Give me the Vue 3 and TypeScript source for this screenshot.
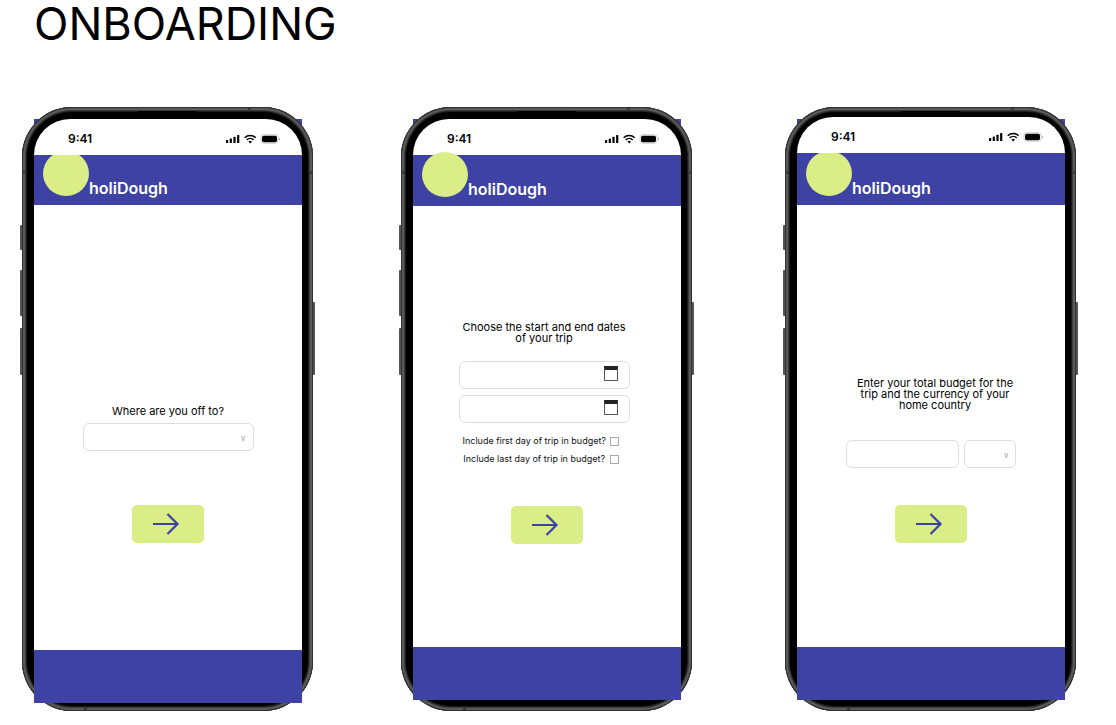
<script setup lang="ts">
import { reactive } from 'vue'

type StepKind = 'destination' | 'dates' | 'budget'

const steps: StepKind[] = ['destination', 'dates', 'budget']

const trip = reactive({
  destination: '',
  start: '',
  end: '',
  includeFirst: false,
  includeLast: false,
  budget: '',
  currency: '',
})
</script>

<template>
  <div class="page">
    <h1 class="title">ONBOARDING</h1>
    <div class="board">
      <section v-for="kind in steps" :key="kind" class="phone" :class="kind">
        <div class="backdrop" aria-hidden="true"></div>
        <div class="frame" aria-hidden="true">
          <i class="key action"></i>
          <i class="key up"></i>
          <i class="key down"></i>
          <i class="key power"></i>
          <i class="speaker"></i>
          <i class="band band-top"></i>
          <i class="band band-bottom"></i>
          <i class="band-side"></i>
        </div>

        <div class="status">
          <span>9:41</span>
          <svg class="signals" width="55" height="12" viewBox="0 0 55 12" aria-hidden="true">
            <rect x="0" y="7" width="2.2" height="3" rx=".6" />
            <rect x="3.7" y="5.5" width="2.2" height="4.5" rx=".6" />
            <rect x="7.4" y="3.7" width="2.2" height="6.3" rx=".6" />
            <rect x="11.1" y="2" width="2.2" height="8" rx=".6" />
            <g fill="none" stroke="#000" stroke-width="1.5">
              <path d="M18.7 4.7a8 8 0 0 1 11 0" />
              <path d="M20.7 6.9a5 5 0 0 1 7 0" />
            </g>
            <path d="M22.4 8.5a2.6 2.6 0 0 1 3.6 0L24.2 10.4z" />
            <rect x="35" y="1.7" width="17" height="8.6" rx="2.6" fill="#fff" stroke="#bbb" stroke-width=".7" />
            <rect x="36" y="2.7" width="15" height="6.6" rx="1.7" />
            <path d="M53 4.5v3a1.6 1.6 0 0 0 0-3z" fill="#aaa" />
          </svg>
        </div>

        <header class="brand">
          <span class="logo"></span>
          <span class="name">holiDough</span>
        </header>

        <form class="step" @submit.prevent>
          <div v-if="kind === 'destination'" class="fields">
            <label class="prompt" for="destination">Where are you off to?</label>
            <div class="field">
              <select id="destination" v-model="trip.destination" class="box">
                <option value=""></option>
              </select>
              <span class="chevron" aria-hidden="true">v</span>
            </div>
          </div>

          <div v-else-if="kind === 'dates'" class="fields">
            <p class="prompt">Choose the start and end dates of your trip</p>
            <div class="stack">
              <div class="field">
                <input v-model="trip.start" class="box" type="text" aria-label="Start date" />
                <button class="calendar" type="button" aria-label="Pick start date"></button>
              </div>
              <div class="field">
                <input v-model="trip.end" class="box" type="text" aria-label="End date" />
                <button class="calendar" type="button" aria-label="Pick end date"></button>
              </div>
            </div>
            <div class="checks">
              <label for="first-day">Include first day of trip in budget?</label>
              <input id="first-day" v-model="trip.includeFirst" type="checkbox" />
              <label for="last-day">Include last day of trip in budget?</label>
              <input id="last-day" v-model="trip.includeLast" type="checkbox" />
            </div>
          </div>

          <div v-else class="fields">
            <p class="prompt">Enter your total budget for the trip and the currency of your home country</p>
            <div class="pair">
              <input v-model="trip.budget" class="box" type="text" aria-label="Total budget" />
              <div class="field">
                <select v-model="trip.currency" class="box" aria-label="Home currency">
                  <option value=""></option>
                </select>
                <span class="chevron" aria-hidden="true">v</span>
              </div>
            </div>
          </div>

          <button class="next" type="submit" aria-label="Next">
            <svg width="28" height="22" viewBox="0 0 28 22" fill="none" stroke="#3d42a4" stroke-width="2.2" aria-hidden="true">
              <path d="M1 11h25M15.5 1l10 10-10 10" />
            </svg>
          </button>
        </form>

        <footer class="foot"></footer>
      </section>
    </div>
  </div>
</template>

<style>
body {
  margin: 0;
  background: #fff;
}
</style>

<style scoped>
.page {
  box-sizing: border-box;
  min-height: 100vh;
  padding-bottom: 14px;
  display: flex;
  flex-direction: column;
  font-family: Inter, "Liberation Sans", sans-serif;
  color: #000;
}
.title {
  margin: 0;
  padding: 0 34px 59px;
  font-size: 45px;
  line-height: 48px;
  font-weight: 400;
}
.board {
  flex: 1;
  display: grid;
  grid-template-columns: 379fr 384fr 331fr;
  padding-left: 22px;
}
.phone {
  --brow: 12px;
  --chin: 8px;
  --brand: 50px;
  --below: 107px;
  --gap: 54px;
  position: relative;
  isolation: isolate;
  box-sizing: border-box;
  width: 291px;
  padding: var(--brow) 11px var(--chin) 12px;
  display: flex;
  flex-direction: column;
}
.dates {
  --chin: 11px;
  --brand: 51px;
  --below: 103px;
  --gap: 38px;
}
.budget {
  --brow: 10px;
  --chin: 11px;
  --brand: 52px;
  --below: 104px;
  --gap: 37px;
}
.backdrop {
  position: absolute;
  z-index: -2;
  top: 12px;
  left: 12px;
  right: 11px;
  height: 60px;
  background: #3d42a4;
}
.frame {
  position: absolute;
  z-index: -1;
  inset: 0;
  border-radius: 50px;
  background: #000;
  box-shadow:
    inset 0 0 0 1px #303030,
    inset 0 0 0 3px #5a5a5a,
    inset 0 0 0 4px #3a3a3a,
    inset 0 0 0 5px #1c1c1c;
}
.key {
  position: absolute;
  left: -2px;
  width: 2px;
  border-radius: 1px 0 0 1px;
  background: #555;
}
.action {
  top: 118px;
  height: 25px;
}
.up {
  top: 163px;
  height: 46px;
}
.down {
  top: 221px;
  height: 47px;
}
.power {
  left: auto;
  right: -2px;
  top: 195px;
  height: 73px;
  border-radius: 0 1px 1px 0;
}
.speaker {
  position: absolute;
  top: 4px;
  left: 40%;
  width: 20%;
  height: 2px;
  border-radius: 1px;
  background: #000;
}
.band {
  position: absolute;
  width: 3px;
  height: 3px;
  background: #383838;
}
.band-top {
  top: 1px;
  right: 62px;
}
.band-bottom {
  bottom: 1px;
  left: 62px;
}
.band-side {
  position: absolute;
  top: 64px;
  left: 0;
  right: 0;
  height: 3px;
  background: linear-gradient(90deg, #3a3a3a 4px, transparent 4px calc(100% - 4px), #3a3a3a calc(100% - 4px));
}
.status {
  box-sizing: border-box;
  height: 36px;
  padding: 4px 21px 0 34px;
  display: flex;
  align-items: center;
  justify-content: space-between;
  border-radius: 42px 42px 0 0;
  background: #fff;
  font-size: 12px;
  line-height: 16px;
  font-weight: 600;
}
.brand {
  position: relative;
  height: var(--brand);
  padding-left: 9px;
  display: flex;
  align-items: flex-end;
  overflow: hidden;
  background: #3d42a4;
}
.dates .brand {
  overflow: visible;
}
.logo {
  flex: none;
  width: 46px;
  height: 45px;
  margin-bottom: 9px;
  border-radius: 50%;
  background: #dbed87;
}
.name {
  margin-bottom: 7px;
  color: #fff;
  font-size: 16px;
  line-height: 20px;
  font-weight: 600;
}
.step {
  flex: 1;
  padding-bottom: var(--below);
  display: flex;
  flex-direction: column;
  align-items: center;
  justify-content: flex-end;
  gap: var(--gap);
  background: #fff;
}
.fields {
  width: 171px;
  display: flex;
  flex-direction: column;
}
.dates .fields {
  padding-right: 6px;
}
.prompt {
  margin: 0 0 6px;
  font-size: 11px;
  line-height: 11px;
  text-align: center;
}
.dates .prompt {
  margin-bottom: 17px;
}
.budget .prompt {
  margin-bottom: 29px;
  padding: 0 2px 0 10px;
}
.field {
  position: relative;
}
.box {
  display: block;
  box-sizing: border-box;
  width: 100%;
  height: 28px;
  margin: 0;
  padding: 0 28px 0 8px;
  border: 1px solid #dedede;
  border-radius: 6px;
  background: #fff;
  font: 11px Inter, "Liberation Sans", sans-serif;
  appearance: none;
}
.chevron {
  position: absolute;
  right: 8px;
  top: 10px;
  font-size: 8px;
  line-height: 10px;
  color: #999;
  pointer-events: none;
}
.stack {
  display: flex;
  flex-direction: column;
  gap: 6px;
}
.calendar {
  position: absolute;
  right: 12px;
  top: 5px;
  width: 14px;
  height: 15px;
  padding: 0;
  border: 1px solid #555;
  border-top: 4px solid #222;
  background: #fff;
}
.checks {
  margin-top: 9px;
  padding-left: 4px;
  display: grid;
  grid-template-columns: max-content 9px;
  grid-auto-rows: 18px;
  column-gap: 4px;
  align-items: center;
  font-size: 9px;
  line-height: 12px;
  text-align: center;
  color: #111;
}
.checks input {
  box-sizing: border-box;
  width: 9px;
  height: 9px;
  margin: 0;
  border: 1px solid #aaa;
  background: #fff;
  appearance: none;
}
.checks input:checked {
  background: #3d42a4;
}
.pair {
  display: grid;
  grid-template-columns: 113fr 52fr;
  gap: 5px;
}
.next {
  width: 72px;
  height: 38px;
  padding: 0 4px 0 0;
  display: flex;
  align-items: center;
  justify-content: center;
  border: 0;
  border-radius: 5px;
  background: #dbed87;
}
.foot {
  height: 53px;
  background: #3d42a4;
}
</style>
